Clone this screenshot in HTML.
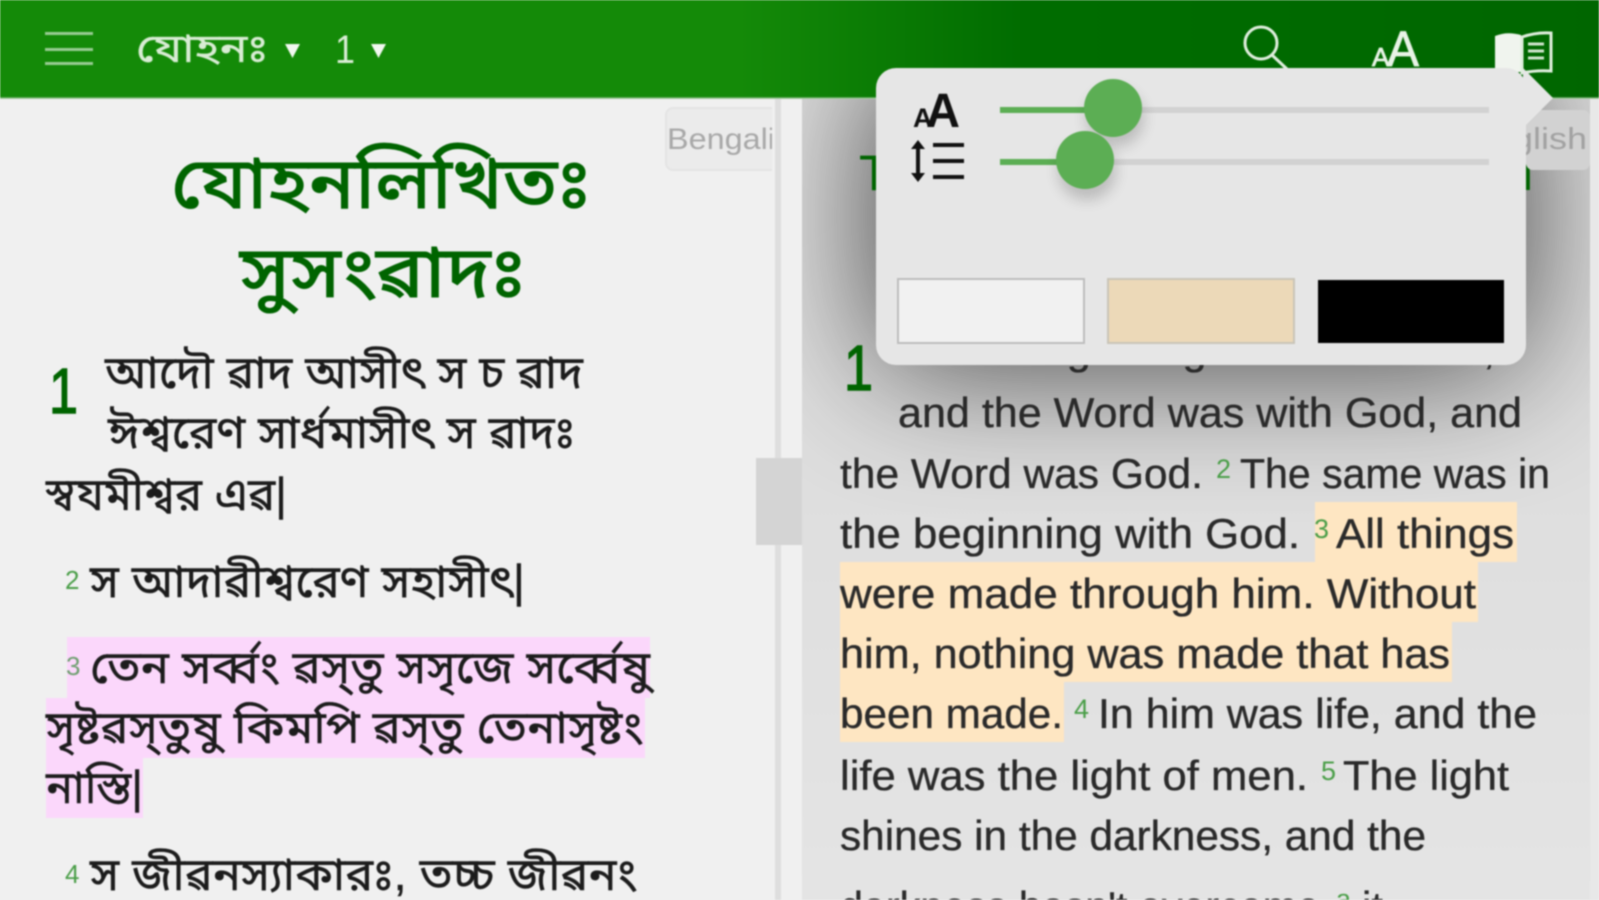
<!DOCTYPE html>
<html lang="bn">
<head>
<meta charset="utf-8">
<title>যোহনঃ 1</title>
<style>
html,body{margin:0;padding:0;width:1599px;height:900px;overflow:hidden;background:#f0f0f0}
svg{display:block;position:absolute;left:0;top:0;filter:blur(.7px)}
.bn{font-family:"Liberation Sans","Noto Sans Bengali","Noto Sans CJK SC",sans-serif;fill:#1c1c1c;stroke:#1c1c1c;stroke-width:.45px}
.en{font-family:"Liberation Sans",sans-serif;font-size:42px;fill:#2a2a2a;stroke:#2a2a2a;stroke-width:.35px}
.vn{font-family:"Liberation Sans",sans-serif;font-size:27px;fill:#4a9e48}
.ch{font-family:"Liberation Sans",sans-serif;font-size:64px;fill:#006400;stroke:#006400;stroke-width:1.4px}
.tt{fill:#006400;stroke:#006400;stroke-width:1.1px}
</style>
</head>
<body>
<svg width="1599" height="900" viewBox="0 0 1599 900" xmlns="http://www.w3.org/2000/svg">
<defs>
<linearGradient id="hd" x1="0" x2="1" y1="0" y2="0">
<stop offset="0" stop-color="#148a08"/><stop offset=".46" stop-color="#148a08"/><stop offset=".64" stop-color="#006c00"/><stop offset="1" stop-color="#006600"/>
</linearGradient>
<linearGradient id="rb" x1="0" x2="0" y1="0" y2="1">
<stop offset="0" stop-color="#dedede"/><stop offset=".5" stop-color="#dedede"/><stop offset="1" stop-color="#e4e4e4"/>
</linearGradient>
<filter id="sh" x="-50%" y="-100%" width="200%" height="300%"><feGaussianBlur stdDeviation="70"/></filter>
<filter id="th" x="-50%" y="-50%" width="200%" height="200%"><feGaussianBlur stdDeviation="7"/></filter>
<clipPath id="rp"><rect x="802" y="99" width="788" height="801"/></clipPath>
<clipPath id="lt"><rect x="0" y="99" width="772" height="801"/></clipPath>
</defs>

<!-- left pane -->
<rect width="1599" height="900" fill="#f0f0f0"/>
<rect x="775" y="99" width="6" height="801" fill="#dedede"/>
<g clip-path="url(#lt)">
<rect x="666" y="108" width="120" height="62" rx="7" fill="#ebebeb" stroke="#e4e4e4" stroke-width="2"/>
<text x="667" y="149" font-family="Liberation Sans,sans-serif" font-size="30" fill="#a8a8a8" textLength="108" lengthAdjust="spacingAndGlyphs">Bengali</text>
</g>
<text class="bn tt" x="171" y="208" font-size="72" textLength="420" lengthAdjust="spacingAndGlyphs">যোহনলিখিতঃ</text>
<text class="bn tt" x="240" y="297" font-size="72" textLength="286" lengthAdjust="spacingAndGlyphs">সুসংৱাদঃ</text>
<text class="ch" x="49" y="413" textLength="29" lengthAdjust="spacingAndGlyphs">1</text>
<rect x="67" y="637" width="583" height="61" fill="#fbd7fb"/>
<rect x="46" y="698" width="599" height="60" fill="#fbd7fb"/>
<rect x="46" y="758" width="97" height="60" fill="#fbd7fb"/>
<text class="bn" x="105" y="388" font-size="46" textLength="478" lengthAdjust="spacingAndGlyphs">আদৌ ৱাদ আসীৎ স চ ৱাদ</text>
<text class="bn" x="108" y="448" font-size="46" textLength="467" lengthAdjust="spacingAndGlyphs">ঈশ্ৱরেণ সার্ধমাসীৎ স ৱাদঃ</text>
<text class="bn" x="46" y="510" font-size="46" textLength="241" lengthAdjust="spacingAndGlyphs">স্ৱযমীশ্ৱর এৱ|</text>
<text class="vn" x="65" y="589" style="font-size:26px">2</text>
<text class="bn" x="90" y="597" font-size="46" textLength="435" lengthAdjust="spacingAndGlyphs">স আদাৱীশ্ৱরেণ সহাসীৎ|</text>
<text class="vn" x="66" y="675" style="font-size:26px;fill:#6f9f70">3</text>
<text class="bn" x="90" y="683" font-size="46" textLength="560" lengthAdjust="spacingAndGlyphs">তেন সৰ্ৱ্ৱং ৱস্‌তু সসৃজে সৰ্ৱ্ৱেষু</text>
<text class="bn" x="46" y="743" font-size="46" textLength="597" lengthAdjust="spacingAndGlyphs">সৃষ্টৱস্‌তুষু কিমপি ৱস্‌তু তেনাসৃষ্টং</text>
<text class="bn" x="46" y="803" font-size="46" textLength="97" lengthAdjust="spacingAndGlyphs">নাস্তি|</text>
<text class="vn" x="65" y="883" style="font-size:26px">4</text>
<text class="bn" x="90" y="890" font-size="46" textLength="547" lengthAdjust="spacingAndGlyphs">স জীৱনস্যাকারঃ, তচ্চ জীৱনং</text>

<!-- right pane -->
<rect x="802" y="99" width="797" height="801" fill="url(#rb)"/>
<rect x="1590" y="99" width="9" height="801" fill="#e8e8e8"/>
<g clip-path="url(#rp)"><rect x="876" y="68" width="648" height="297" rx="20" fill="#000" opacity=".72" filter="url(#sh)"/></g>
<text x="859" y="190" font-family="Liberation Sans,sans-serif" font-size="50" fill="#006400" textLength="674" lengthAdjust="spacing">The Gospel of John</text>
<rect x="1526" y="110" width="64" height="60" rx="7" fill="#d2d2d2"/>
<text x="1469" y="149" font-family="Liberation Sans,sans-serif" font-size="31" fill="#a2a2a2" textLength="118" lengthAdjust="spacingAndGlyphs">English</text>
<text class="ch" x="844" y="390" textLength="29" lengthAdjust="spacingAndGlyphs">1</text>

<rect x="1315" y="502" width="202" height="60" fill="#fee6c2"/>
<rect x="840" y="562" width="638" height="60" fill="#fee6c2"/>
<rect x="840" y="622" width="612" height="60" fill="#fee6c2"/>
<rect x="840" y="682" width="224" height="60" fill="#fee6c2"/>

<text class="en" x="898" y="364" textLength="597" lengthAdjust="spacingAndGlyphs">In the beginning was the Word,</text>
<text class="en" x="898" y="427" textLength="624" lengthAdjust="spacingAndGlyphs">and the Word was with God, and</text>
<text class="en" x="840" y="488" textLength="363" lengthAdjust="spacingAndGlyphs">the Word was God.</text>
<text class="vn" x="1216" y="478">2</text>
<text class="en" x="1240" y="488" textLength="310" lengthAdjust="spacingAndGlyphs">The same was in</text>
<text class="en" x="840" y="548" textLength="460" lengthAdjust="spacingAndGlyphs">the beginning with God.</text>
<text class="vn" x="1314" y="538">3</text>
<text class="en" x="1336" y="548" textLength="178" lengthAdjust="spacingAndGlyphs">All things</text>
<text class="en" x="840" y="608" textLength="636" lengthAdjust="spacingAndGlyphs">were made through him. Without</text>
<text class="en" x="840" y="668" textLength="610" lengthAdjust="spacingAndGlyphs">him, nothing was made that has</text>
<text class="en" x="840" y="728" textLength="223" lengthAdjust="spacingAndGlyphs">been made.</text>
<text class="vn" x="1074" y="718">4</text>
<text class="en" x="1098" y="728" textLength="439" lengthAdjust="spacingAndGlyphs">In him was life, and the</text>
<text class="en" x="840" y="790" textLength="468" lengthAdjust="spacingAndGlyphs">life was the light of men.</text>
<text class="vn" x="1321" y="780">5</text>
<text class="en" x="1343" y="790" textLength="166" lengthAdjust="spacingAndGlyphs">The light</text>
<text class="en" x="840" y="850" textLength="586" lengthAdjust="spacingAndGlyphs">shines in the darkness, and the</text>
<text class="en" x="840" y="921" textLength="480" lengthAdjust="spacingAndGlyphs">darkness hasn't overcome</text>
<text class="vn" x="1336" y="908">a</text>
<text class="en" x="1362" y="921">it.</text>

<!-- splitter handle -->
<rect x="756" y="458" width="46" height="87" fill="#d4d4d4"/>

<!-- header -->
<rect width="1599" height="98" fill="url(#hd)"/>
<rect y="97" width="1599" height="2" fill="#7fb87a" opacity=".6"/>
<g fill="#97cb92"><rect x="45" y="32" width="48" height="3"/><rect x="45" y="48" width="48" height="3"/><rect x="45" y="62" width="48" height="3"/></g>
<text class="bn" x="136" y="62" font-size="40" style="fill:#d8ecd4;stroke:#d8ecd4;stroke-width:.3px" textLength="132" lengthAdjust="spacingAndGlyphs">যোহনঃ</text>
<path d="M285 44h15l-7.500 14z" fill="#f2f8f0"/>
<text x="335" y="63" font-family="Liberation Sans,sans-serif" font-size="40" fill="#d8ecd4" textLength="20" lengthAdjust="spacingAndGlyphs">1</text>
<path d="M371 44h15l-7.500 14z" fill="#f2f8f0"/>

<!-- search icon -->
<circle cx="1261" cy="43" r="16" fill="none" stroke="#dfeedd" stroke-width="3"/>
<path d="M1272 55l16 15" stroke="#dfeedd" stroke-width="3" fill="none"/>
<!-- aA icon -->
<text x="1372" y="66" font-family="Liberation Sans,sans-serif" font-size="26" fill="#e8f3e6" stroke="#e8f3e6" stroke-width=".8">A</text>
<text x="1387" y="66" font-family="Liberation Sans,sans-serif" font-size="50" fill="#e8f3e6" stroke="#e8f3e6" stroke-width=".8" textLength="32" lengthAdjust="spacingAndGlyphs">A</text>
<!-- book icon -->
<path d="M1495 36q12-5 26-1v37h-26z" fill="#f0f4ee"/>
<path d="M1522 37q14-5 29-4v38q-15-1-29 2z" fill="none" stroke="#dfeedd" stroke-width="3"/>
<path d="M1528 44h16M1528 51h16M1528 58h16" stroke="#cfe4cc" stroke-width="3" fill="none"/>

<!-- popup -->
<path d="M1523 68L1553 98L1523 128z" fill="#e6e6e6"/>
<rect x="876" y="68" width="650" height="297" rx="20" fill="#e6e6e6"/>

<!-- popup icons -->
<text x="913" y="127" font-family="Liberation Sans,sans-serif" font-size="27" font-weight="bold" fill="#111">A</text>
<text x="926" y="127" font-family="Liberation Sans,sans-serif" font-size="48" font-weight="bold" fill="#111" textLength="34" lengthAdjust="spacingAndGlyphs">A</text>
<path d="M918 144v34" stroke="#111" stroke-width="4" fill="none"/>
<path d="M911 149l7-9 7 9zM911 173l7 9 7-9z" fill="#111"/>
<path d="M933 145h31M933 161h31M933 177h31" stroke="#111" stroke-width="4" fill="none"/>

<!-- sliders -->
<rect x="1000" y="107" width="489" height="6" fill="#d2d2d2"/>
<rect x="1000" y="159" width="489" height="6" fill="#d2d2d2"/>
<rect x="1000" y="107" width="113" height="6" fill="#5cae54"/>
<rect x="1000" y="159" width="85" height="6" fill="#5cae54"/>
<circle cx="1115" cy="118" r="29" fill="#000" opacity=".18" filter="url(#th)"/>
<circle cx="1087" cy="171" r="29" fill="#000" opacity=".18" filter="url(#th)"/>
<circle cx="1113" cy="108" r="29" fill="#5cae54"/>
<circle cx="1085" cy="160" r="29" fill="#5cae54"/>

<!-- swatches -->
<rect x="898" y="279" width="186" height="64" fill="#f1f1f1" stroke="#bdbdbd" stroke-width="2"/>
<rect x="1108" y="279" width="186" height="64" fill="#ecd9b8" stroke="#c9c4b8" stroke-width="2"/>
<rect x="1318" y="280" width="186" height="63" fill="#000"/>
</svg>
</body>
</html>
